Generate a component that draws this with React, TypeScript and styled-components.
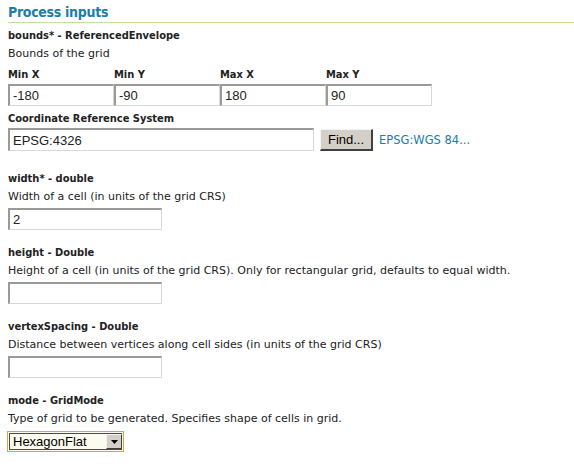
import React from "react";
import styled, { createGlobalStyle } from "styled-components";

const Global = createGlobalStyle`
  html, body { margin: 0; padding: 0; background: #fff; }
  body { font-family: "DejaVu Sans", sans-serif; font-size: 11px; color: #222; }
`;

const Page = styled.div`
  padding: 3px 0 0 8px;
`;

const Title = styled.h2`
  margin: 0;
  font-family: "DejaVu Sans Condensed", "DejaVu Sans", sans-serif;
  font-size: 14px;
  letter-spacing: -0.3px;
  font-weight: bold;
  color: #1b7ea6;
  line-height: 18px;
  padding-bottom: 1px;
  border-bottom: 1px solid #c3e09a;
`;

const Param = styled.div<{ $gap?: number }>`
  display: flex;
  flex-direction: column;
  align-items: flex-start;
  margin-top: ${(p) => p.$gap ?? 14}px;
`;

const Label = styled.div<{ $mt?: number }>`
  font-family: "DejaVu Sans Condensed", "DejaVu Sans", sans-serif;
  font-weight: bold;
  line-height: 18px;
  margin-top: ${(p) => p.$mt ?? 0}px;
  color: #222;
`;

const Desc = styled.div`
  line-height: 18px;
  color: #222;
`;

const BoundsGrid = styled.div`
  display: grid;
  grid-template-columns: repeat(4, 106px);
  margin-top: 3px;
`;

const BoundCell = styled.div`
  display: flex;
  flex-direction: column;
`;

const TextInput = styled.input<{ $w: number; $h?: number }>`
  box-sizing: border-box;
  width: ${(p) => p.$w}px;
  height: ${(p) => p.$h ?? 22}px;
  margin: 0;
  padding: 0 3px;
  border-style: solid;
  border-width: 2px 1px 1px 2px;
  border-color: #9a9a9a #d8d8d8 #d8d8d8 #9a9a9a;
  background: #fff;
  font-family: "Liberation Sans", Arial, sans-serif;
  font-size: 13px;
  color: #222;
  outline: none;
`;

const InputWrap = styled.div<{ $mt: number }>`
  margin-top: ${(p) => p.$mt}px;
`;

const CrsRow = styled.div`
  display: flex;
  align-items: center;
`;

const FindButton = styled.button`
  box-sizing: border-box;
  margin-left: 6px;
  width: 53px;
  height: 22px;
  padding: 0;
  background: #d4d0c8;
  border-style: solid;
  border-width: 1px 2px 2px 1px;
  border-color: #f4f4f4 #404040 #404040 #f4f4f4;
  font-family: "Liberation Sans", Arial, sans-serif;
  font-size: 13px;
  color: #000;
`;

const Link = styled.a`
  margin-left: 6px;
  color: #1b7ea6;
  font-size: 11.5px;
  text-decoration: none;
`;

const Select = styled.div`
  box-sizing: border-box;
  margin-top: 3px;
  margin-left: -1px;
  width: 117px;
  height: 21px;
  display: flex;
  align-items: stretch;
  border: 1px solid #e0a040;
  background: #fbfbf0;
  padding: 1px;
`;

const SelectInner = styled.div`
  flex: 1;
  display: flex;
  border: 1px solid #4a4a4a;
  border-right: none;
`;

const SelectText = styled.span`
  flex: 1;
  padding-left: 3px;
  font-family: "Liberation Sans", Arial, sans-serif;
  font-size: 13px;
  line-height: 15px;
  color: #000;
`;

const Arrow = styled.span`
  width: 16px;
  box-sizing: border-box;
  background: #d4d0c8;
  border-style: solid;
  border-width: 1px;
  border-color: #f4f4f4 #404040 #404040 #f4f4f4;
  display: flex;
  align-items: center;
  justify-content: center;
`;

export default function App() {
  return (
    <>
      <Global />
      <Page>
        <Title>Process inputs</Title>
        <Param $gap={4}>
          <Label>bounds* - ReferencedEnvelope</Label>
          <Desc>Bounds of the grid</Desc>
          <BoundsGrid>
            {[
              ["Min X", "-180"],
              ["Min Y", "-90"],
              ["Max X", "180"],
              ["Max Y", "90"],
            ].map(([l, v]) => (
              <BoundCell key={l}>
                <Label>{l}</Label>
                <TextInput $w={106} defaultValue={v} />
              </BoundCell>
            ))}
          </BoundsGrid>
          <Label $mt={4}>Coordinate Reference System</Label>
          <CrsRow>
            <TextInput $w={306} $h={23} defaultValue="EPSG:4326" />
            <FindButton>Find...</FindButton>
            <Link href="#">EPSG:WGS 84...</Link>
          </CrsRow>
        </Param>
        <Param $gap={19}>
          <Label>width* - double</Label>
          <Desc>Width of a cell (in units of the grid CRS)</Desc>
          <InputWrap $mt={2}>
            <TextInput $w={154} defaultValue="2" />
          </InputWrap>
        </Param>
        <Param>
          <Label>height - Double</Label>
          <Desc>Height of a cell (in units of the grid CRS). Only for rectangular grid, defaults to equal width.</Desc>
          <InputWrap $mt={2}>
            <TextInput $w={154} />
          </InputWrap>
        </Param>
        <Param>
          <Label>vertexSpacing - Double</Label>
          <Desc>Distance between vertices along cell sides (in units of the grid CRS)</Desc>
          <InputWrap $mt={2}>
            <TextInput $w={154} />
          </InputWrap>
        </Param>
        <Param>
          <Label>mode - GridMode</Label>
          <Desc>Type of grid to be generated. Specifies shape of cells in grid.</Desc>
          <Select>
            <SelectInner>
              <SelectText>HexagonFlat</SelectText>
              <Arrow>
                <svg width="7" height="4" viewBox="0 0 7 4">
                  <polygon points="0,0 7,0 3.5,4" fill="#000" />
                </svg>
              </Arrow>
            </SelectInner>
          </Select>
        </Param>
      </Page>
    </>
  );
}
